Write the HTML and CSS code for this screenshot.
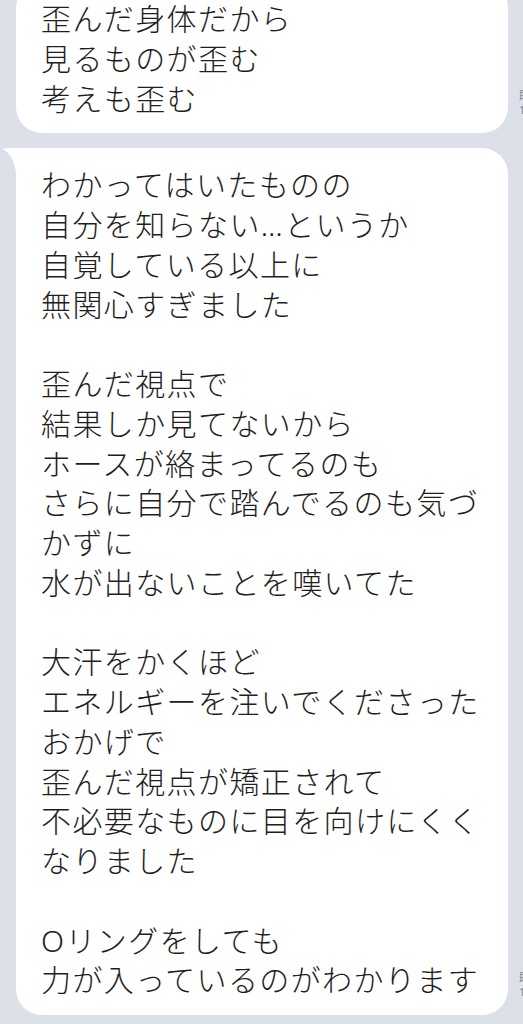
FILE: index.html
```html
<!DOCTYPE html>
<html lang="ja">
<head>
    <meta charset="UTF-8">
    <meta name="viewport" content="width=device-width, initial-scale=1.0">
    <title>トーク</title>
    <link rel="stylesheet" href="styles.css">
</head>
<body>

    <div class="talk">
        <!-- 続きのメッセージ -->
        <div class="row">
            <div class="bubble">
                <p class="text">歪んだ身体だから
見るものが歪む
考えも歪む</p>
            </div>
            <div class="meta">既読
14:05</div>
        </div>

        <div class="row">
            <div class="bubble first">
                <svg class="tail" width="14" height="32" viewBox="0 0 14 32">
                    <path d="M0 1.5 Q0.5 0 4 0 L14 0 L14 32 L13.5 32 Q13 8 0 1.5 Z" fill="#fff"/>
                </svg>
                <p class="text">わかってはいたものの
自分を知らない…というか
自覚している以上に
無関心すぎました

歪んだ視点で
結果しか見てないから
ホースが絡まってるのも
さらに自分で踏んでるのも気づ
かずに
水が出ないことを嘆いてた

大汗をかくほど
エネルギーを注いでくださった
おかげで
歪んだ視点が矯正されて
不必要なものに目を向けにくく
なりました

Oリングをしても
力が入っているのがわかります</p>
            </div>
            <div class="meta">既読
14:06</div>
        </div>
    </div>

</body>
</html>
```

FILE: styles.css
```css
html, body {
    overflow: hidden;
}
body {
    margin: 0;
    background-color: #dbe0e9;
    font-family: 'Noto Sans', 'Noto Sans CJK JP', sans-serif;
}
.talk {
    margin-top: -18px;
    padding-left: 16px;
    display: flex;
    flex-direction: column;
    gap: 15px;
}
.row {
    display: flex;
    align-items: flex-end;
    gap: 11px;
}
.bubble {
    position: relative;
    flex: 0 0 492px;
    box-sizing: border-box;
    padding: 17px 10px 15px 25px;
    background-color: #fff;
    border-radius: 26px;
}
.bubble.first {
    border-top-left-radius: 0;
}
.text {
    margin: 0;
    color: #1e1e1e;
    font-size: 30px;
    font-weight: 300;
    letter-spacing: 1.4px;
    line-height: 39.75px;
    white-space: pre;
}
.tail {
    position: absolute;
    left: -13px;
    top: 0;
}
.meta {
    flex-shrink: 0;
    margin-bottom: 16px;
    font-size: 11px;
    line-height: 14px;
    color: #7d8590;
    white-space: pre;
}
```
